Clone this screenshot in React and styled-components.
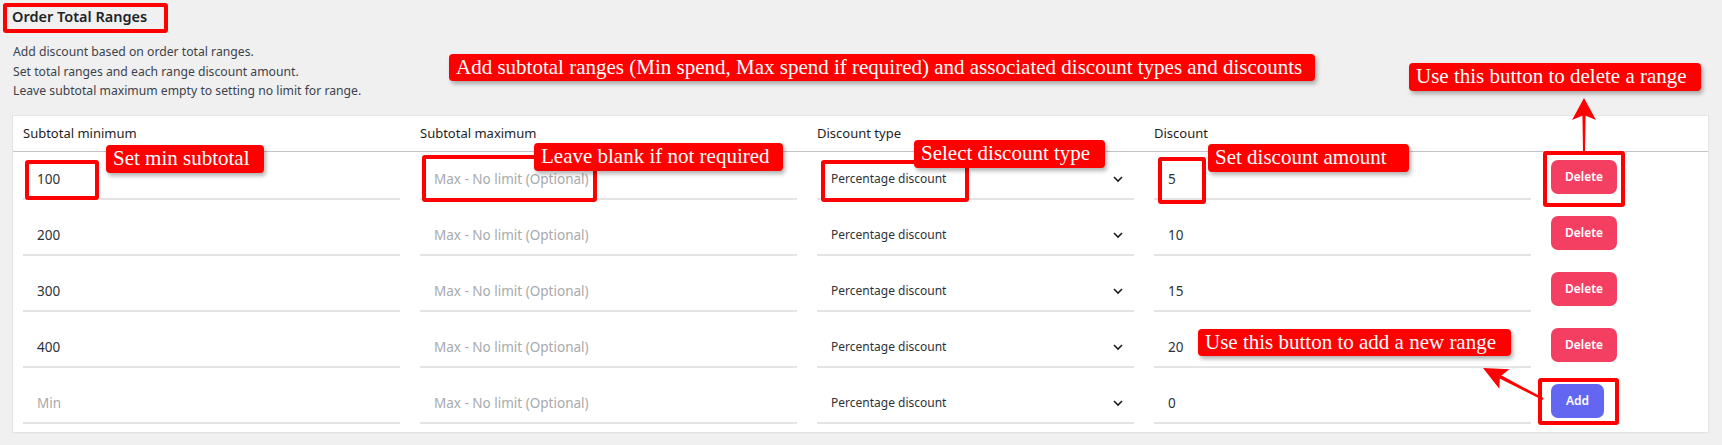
import React from "react";
import styled, { createGlobalStyle } from "styled-components";

const GlobalStyle = createGlobalStyle`
  html, body {
    margin: 0;
    padding: 0;
    background: #f0f0f1;
  }
  * { box-sizing: border-box; }
`;

const UI_FONT = `"Noto Sans", "Open Sans", "Liberation Sans", sans-serif`;
const NOTE_FONT = `"Liberation Serif", "Times New Roman", serif`;

const Page = styled.div`
  position: relative;
  width: 1722px;
  height: 445px;
  overflow: hidden;
  padding: 3px 14px 0 13px;
  background: #f0f0f1;
  font-family: ${UI_FONT};
  color: #1d2327;
`;

/* red marker frame drawn around the section heading */
const TitleBox = styled.div`
  width: 165px;
  margin-left: -10px;
  padding: 0 0 4px 5px;
  border: 4px solid #f00;
  border-radius: 3px;
`;

const Title = styled.h2`
  margin: 0;
  font-size: 14.5px;
  line-height: 18px;
  font-weight: 600;
  color: #1d2327;
  white-space: nowrap;
`;

const Intro = styled.p`
  margin: 9px 0 0;
  font-size: 12.2px;
  line-height: 19.5px;
  color: #3c434a;
`;

const Card = styled.section`
  margin-top: 15px;
  background: #fff;
  box-shadow: 0 0 0 1px #e4e4e6, 0 1px 2px rgba(0, 0, 0, 0.05);
`;

const columns = `377px 377px 317px 377px 1fr`;

const HeaderRow = styled.div`
  display: grid;
  grid-template-columns: ${columns};
  column-gap: 20px;
  align-items: center;
  height: 36px;
  padding: 0 10px;
  border-bottom: 1px solid #c3c4c7;
`;

const HeadCell = styled.div`
  font-size: 13px;
  color: #1e1e1e;
`;

const RangeRow = styled.div`
  display: grid;
  grid-template-columns: ${columns};
  column-gap: 20px;
  align-items: start;
  padding: 8px 10px;
`;

const FieldInput = styled.input`
  display: block;
  width: 100%;
  height: 40px;
  margin: 0;
  padding: 0 14px;
  border: 0;
  border-bottom: 2px solid #e4e4e4;
  border-radius: 0;
  background: transparent;
  font-family: ${UI_FONT};
  font-size: 13.5px;
  color: #2c3338;
  outline: none;

  &::placeholder {
    color: #a7aaad;
    opacity: 1;
  }
`;

const SelectWrap = styled.div`
  position: relative;
`;

const Select = styled.select`
  display: block;
  width: 100%;
  height: 40px;
  margin: 0;
  padding: 0 30px 0 14px;
  border: 0;
  border-bottom: 2px solid #e4e4e4;
  border-radius: 0;
  background: transparent;
  font-family: ${UI_FONT};
  font-size: 12px;
  color: #2c3338;
  appearance: none;
  -webkit-appearance: none;
  outline: none;
`;

const Chevron = styled.svg`
  position: absolute;
  right: 11px;
  top: 16px;
  pointer-events: none;
`;

const ActionButton = styled.button`
  height: 34px;
  min-width: ${(p) => (p.$variant === "add" ? 53 : 66)}px;
  padding: 0 12px;
  border: 0;
  border-radius: 7px;
  background: ${(p) => (p.$variant === "add" ? "#6366f1" : "#f43f63")};
  color: #fff;
  font-family: ${UI_FONT};
  font-size: 12px;
  font-weight: 600;
  cursor: pointer;
  justify-self: start;
`;

/* Callout layer drawn over the form */
const Overlay = styled.div`
  position: absolute;
  inset: 0;
  pointer-events: none;
`;

const Callout = styled.div`
  position: absolute;
  left: ${(p) => p.$x}px;
  top: ${(p) => p.$y}px;
  width: ${(p) => p.$w}px;
  height: ${(p) => p.$h || 28}px;
  padding: 0 0 2px 7px;
  background: #ff0000;
  border-radius: 4px;
  box-shadow: 2px 3px 4px rgba(0, 0, 0, 0.3);
  color: #fff;
  font-family: ${NOTE_FONT};
  font-size: ${(p) => p.$size || 21}px;
  line-height: 26px;
  white-space: nowrap;
  overflow: hidden;
`;

const Frame = styled.div`
  position: absolute;
  left: ${(p) => p.$x}px;
  top: ${(p) => p.$y}px;
  width: ${(p) => p.$w}px;
  height: ${(p) => p.$h}px;
  border: 4px solid #f00;
  border-radius: 3px;
`;

const ArrowSvg = styled.svg`
  position: absolute;
  left: ${(p) => p.$x}px;
  top: ${(p) => p.$y}px;
  overflow: visible;
`;

const rows = [
  { min: "100", disc: "5", action: "delete" },
  { min: "200", disc: "10", action: "delete" },
  { min: "300", disc: "15", action: "delete" },
  { min: "400", disc: "20", action: "delete" },
  { min: "", disc: "0", action: "add" },
];

function DiscountSelect() {
  return (
    <SelectWrap>
      <Select defaultValue="percentage">
        <option value="percentage">Percentage discount</option>
        <option value="fixed">Fixed discount</option>
      </Select>
      <Chevron width="10" height="7" viewBox="0 0 10 7">
        <polyline
          points="1,1 5,5 9,1"
          fill="none"
          stroke="#1e1e1e"
          strokeWidth="1.6"
        />
      </Chevron>
    </SelectWrap>
  );
}

export default function App() {
  return (
    <>
      <GlobalStyle />
      <Page>
        <TitleBox>
          <Title>Order Total Ranges</Title>
        </TitleBox>
        <Intro>
          Add discount based on order total ranges.
          <br />
          Set total ranges and each range discount amount.
          <br />
          Leave subtotal maximum empty to setting no limit for range.
        </Intro>

        <Card>
          <HeaderRow>
            <HeadCell>Subtotal minimum</HeadCell>
            <HeadCell>Subtotal maximum</HeadCell>
            <HeadCell>Discount type</HeadCell>
            <HeadCell>Discount</HeadCell>
            <HeadCell />
          </HeaderRow>
          {rows.map((r, i) => (
            <RangeRow key={i}>
              <FieldInput defaultValue={r.min} placeholder="Min" />
              <FieldInput placeholder="Max - No limit (Optional)" />
              <DiscountSelect />
              <FieldInput defaultValue={r.disc} />
              <ActionButton $variant={r.action}>
                {r.action === "add" ? "Add" : "Delete"}
              </ActionButton>
            </RangeRow>
          ))}
        </Card>

        <Overlay>
          <Frame $x={25} $y={160} $w={74} $h={40} />
          <Frame $x={422} $y={155} $w={175} $h={47} />
          <Frame $x={821} $y={160} $w={148} $h={42} />
          <Frame $x={1158} $y={157} $w={48} $h={47} />
          <Frame $x={1543} $y={151} $w={82} $h={56} />
          <Frame $x={1538} $y={378} $w={81} $h={47} />

          <Callout $x={449} $y={54} $w={866} $h={27}>
            Add subtotal ranges (Min spend, Max spend if required) and associated discount types and discounts
          </Callout>
          <Callout $x={1409} $y={63} $w={292}>
            Use this button to delete a range
          </Callout>
          <Callout $x={106} $y={145} $w={158}>
            Set min subtotal
          </Callout>
          <Callout $x={534} $y={143} $w={249}>
            Leave blank if not required
          </Callout>
          <Callout $x={914} $y={140} $w={191}>
            Select discount type
          </Callout>
          <Callout $x={1208} $y={144} $w={201}>
            Set discount amount
          </Callout>
          <Callout $x={1198} $y={329} $w={313} $h={27}>
            Use this button to add a new range
          </Callout>

          {/* upward arrow pointing from the Delete button to its note */}
          <ArrowSvg $x={1572} $y={96} width="24" height="56" viewBox="0 0 24 56">
            <polygon points="10.4,18 13.6,18 13,55 11,55" fill="#f00" />
            <polygon points="12,2 24,24 12,19 0,24" fill="#f00" />
          </ArrowSvg>

          {/* diagonal arrow from the Add button to its note */}
          <ArrowSvg $x={1470} $y={355} width="80" height="50" viewBox="0 0 80 50">
            <polygon
              points="30.7,20.1 29.1,23.3 72.5,44.9 73.5,43.1"
              fill="#f00"
            />
            <polygon
              points="13,13 39.4,14.2 29.9,21.7 29.3,33.8"
              fill="#f00"
            />
          </ArrowSvg>
        </Overlay>
      </Page>
    </>
  );
}
